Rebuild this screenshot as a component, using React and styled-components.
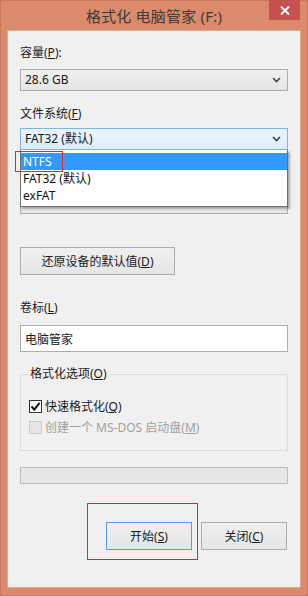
import styled, { createGlobalStyle, css } from 'styled-components'

const GlobalStyle = createGlobalStyle`
  html, body {
    margin: 0;
    padding: 0;
    background: #ffffff;
  }
  * {
    box-sizing: border-box;
  }
`

const FONT = `"Noto Sans", "Noto Sans CJK SC", sans-serif`

const Chevron = () => (
  <svg width="9" height="6" viewBox="0 0 9 6">
    <polyline points="1,1 4.5,4.5 8,1" fill="none" stroke="#444" strokeWidth="1.6" />
  </svg>
)

const CloseGlyph = () => (
  <svg width="10" height="9" viewBox="0 0 10 9">
    <path d="M1 0.5 L9 8.5 M9 0.5 L1 8.5" stroke="#ffffff" strokeWidth="2" />
  </svg>
)

const Check = () => (
  <svg width="11" height="11" viewBox="0 0 11 11">
    <polyline points="1.5,5.5 4.3,8.6 9.5,1.8" fill="none" stroke="#111" strokeWidth="2" />
  </svg>
)

const App = () => {
  return (
    <>
      <GlobalStyle />
      <Window>
        <TitleBar>
          <Title>格式化 电脑管家 (F:)</Title>
          <CloseButton>
            <CloseGlyph />
          </CloseButton>
        </TitleBar>
        <Content>
          <Label $top={14}>容量(<u>P</u>):</Label>
          <Combo $top={8}>
            <span>28.6 GB</span>
            <Chevron />
          </Combo>

          <Label $top={15}>文件系统(<u>F</u>)</Label>
          <ComboWrap $top={6}>
            <Combo $open>
              <span>FAT32 (默认)</span>
              <Chevron />
            </Combo>
            <DropList>
              <Option $selected>NTFS</Option>
              <Option>FAT32 (默认)</Option>
              <Option>exFAT</Option>
            </DropList>
            <Marker $left={-5} $top={23} $width={48} $height={21} />
          </ComboWrap>

          {/* allocation size field, covered by the open list */}
          <Label $top={19} />
          <Combo $top={7} />

          <Button $top={33} $width={155}>
            还原设备的默认值(<u>D</u>)
          </Button>

          <Label $top={25}>卷标(<u>L</u>)</Label>
          <TextBox $top={9}>电脑管家</TextBox>

          <GroupBox>
            <Legend>格式化选项(<u>O</u>)</Legend>
            <CheckRow $top={16}>
              <CheckBox>
                <Check />
              </CheckBox>
              <span>快速格式化(<u>Q</u>)</span>
            </CheckRow>
            <CheckRow $top={5} $disabled>
              <CheckBox $disabled />
              <span>创建一个 MS-DOS 启动盘(<u>M</u>)</span>
            </CheckRow>
          </GroupBox>

          <Progress />

          <ButtonRow>
            <StartWrap>
              <Button $width={86} $default>
                开始(<u>S</u>)
              </Button>
              <Marker $left={-19} $top={-19} $width={111} $height={57} />
            </StartWrap>
            <Button $width={86}>
              关闭(<u>C</u>)
            </Button>
          </ButtonRow>
        </Content>
      </Window>
    </>
  )
}

const Window = styled.div`
  width: 308px;
  height: 596px;
  display: flex;
  flex-direction: column;
  padding: 0 8px 9px 8px;
  background: #da8b6c;
  box-shadow: inset 0 0 0 1px #c97a5c;
  font-family: ${FONT};
`

const TitleBar = styled.div`
  position: relative;
  height: 31px;
  display: flex;
  align-items: center;
  justify-content: center;
  padding-bottom: 1px;
`

const Title = styled.div`
  font-size: 15px;
  color: #3a3a3a;
  letter-spacing: 0.2px;
`

const CloseButton = styled.div`
  position: absolute;
  top: 0;
  right: 0;
  width: 31px;
  height: 20px;
  background: #c75050;
  display: flex;
  align-items: center;
  justify-content: center;
`

const Content = styled.div`
  flex: 1;
  display: flex;
  flex-direction: column;
  padding: 0 12px;
  background: #f0f0f0;
  box-shadow: 0 0 0 1px #e3a68d;
  font-size: 12px;
  color: #1a1a1a;
`

const Label = styled.div`
  margin-top: ${p => p.$top}px;
  line-height: 16px;
  height: 16px;
`

const Combo = styled.div`
  margin-top: ${p => p.$top || 0}px;
  height: 22px;
  display: flex;
  align-items: center;
  justify-content: space-between;
  padding: 0 6px 0 4px;
  border: 1px solid #acacac;
  background: linear-gradient(#f0f0f0, #e5e5e5);
  line-height: 16px;
  ${p => p.$open && css`
    border-color: #7eb4ea;
    background: linear-gradient(#ecf4fc, #dcecfc);
  `}
`

const ComboWrap = styled.div`
  position: relative;
  z-index: 2;
  margin-top: ${p => p.$top}px;
`

const DropList = styled.div`
  position: absolute;
  left: 0;
  right: 0;
  top: 100%;
  padding: 3px 0 2px 0;
  background: #ffffff;
  border: 1px solid #6f6f6f;
  border-top: none;
  box-shadow: 2px 2px 2px rgba(0, 0, 0, 0.3);
`

const Option = styled.div`
  height: 17px;
  line-height: 17px;
  padding-left: 2px;
  color: #111;
  ${p => p.$selected && css`
    background: #3399ff;
    color: #ffffff;
  `}
`

const Marker = styled.div`
  position: absolute;
  left: ${p => p.$left}px;
  top: ${p => p.$top}px;
  width: ${p => p.$width}px;
  height: ${p => p.$height}px;
  border: 1px solid #ee2222;
  pointer-events: none;
`

const Button = styled.div`
  margin-top: ${p => p.$top || 0}px;
  width: ${p => p.$width}px;
  height: 28px;
  display: flex;
  align-items: center;
  justify-content: center;
  border: 1px solid #acacac;
  background: linear-gradient(#f0f0f0, #e5e5e5);
  color: #1a1a1a;
  ${p => p.$default && css`
    border-color: #569de5;
  `}
`

const TextBox = styled.div`
  margin-top: ${p => p.$top}px;
  height: 27px;
  display: flex;
  align-items: center;
  padding-left: 4px;
  background: #ffffff;
  border: 1px solid #abadb3;
`

const GroupBox = styled.fieldset`
  margin: 14px 0 0 0;
  padding: 0 8px 15px 8px;
  border: 1px solid #dcdcdc;
  min-inline-size: 0;
`

const Legend = styled.legend`
  padding: 0 2px;
  margin-left: -1px;
  line-height: 16px;
  height: 16px;
`

const CheckRow = styled.div`
  margin-top: ${p => p.$top}px;
  height: 16px;
  display: flex;
  align-items: center;
  gap: 3px;
  color: ${p => (p.$disabled ? '#a0a0a0' : '#1a1a1a')};
`

const CheckBox = styled.div`
  width: 13px;
  height: 13px;
  display: flex;
  align-items: center;
  justify-content: center;
  border: 1px solid ${p => (p.$disabled ? '#cccccc' : '#333333')};
  background: ${p => (p.$disabled ? '#e6e6e6' : '#ffffff')};
`

const Progress = styled.div`
  margin-top: 16px;
  height: 17px;
  border: 1px solid #bcbcbc;
  background: #e6e6e6;
`

const ButtonRow = styled.div`
  margin-top: 38px;
  display: flex;
  justify-content: flex-end;
  gap: 9px;
  padding-right: 1px;
`

const StartWrap = styled.div`
  position: relative;
`

export default App
